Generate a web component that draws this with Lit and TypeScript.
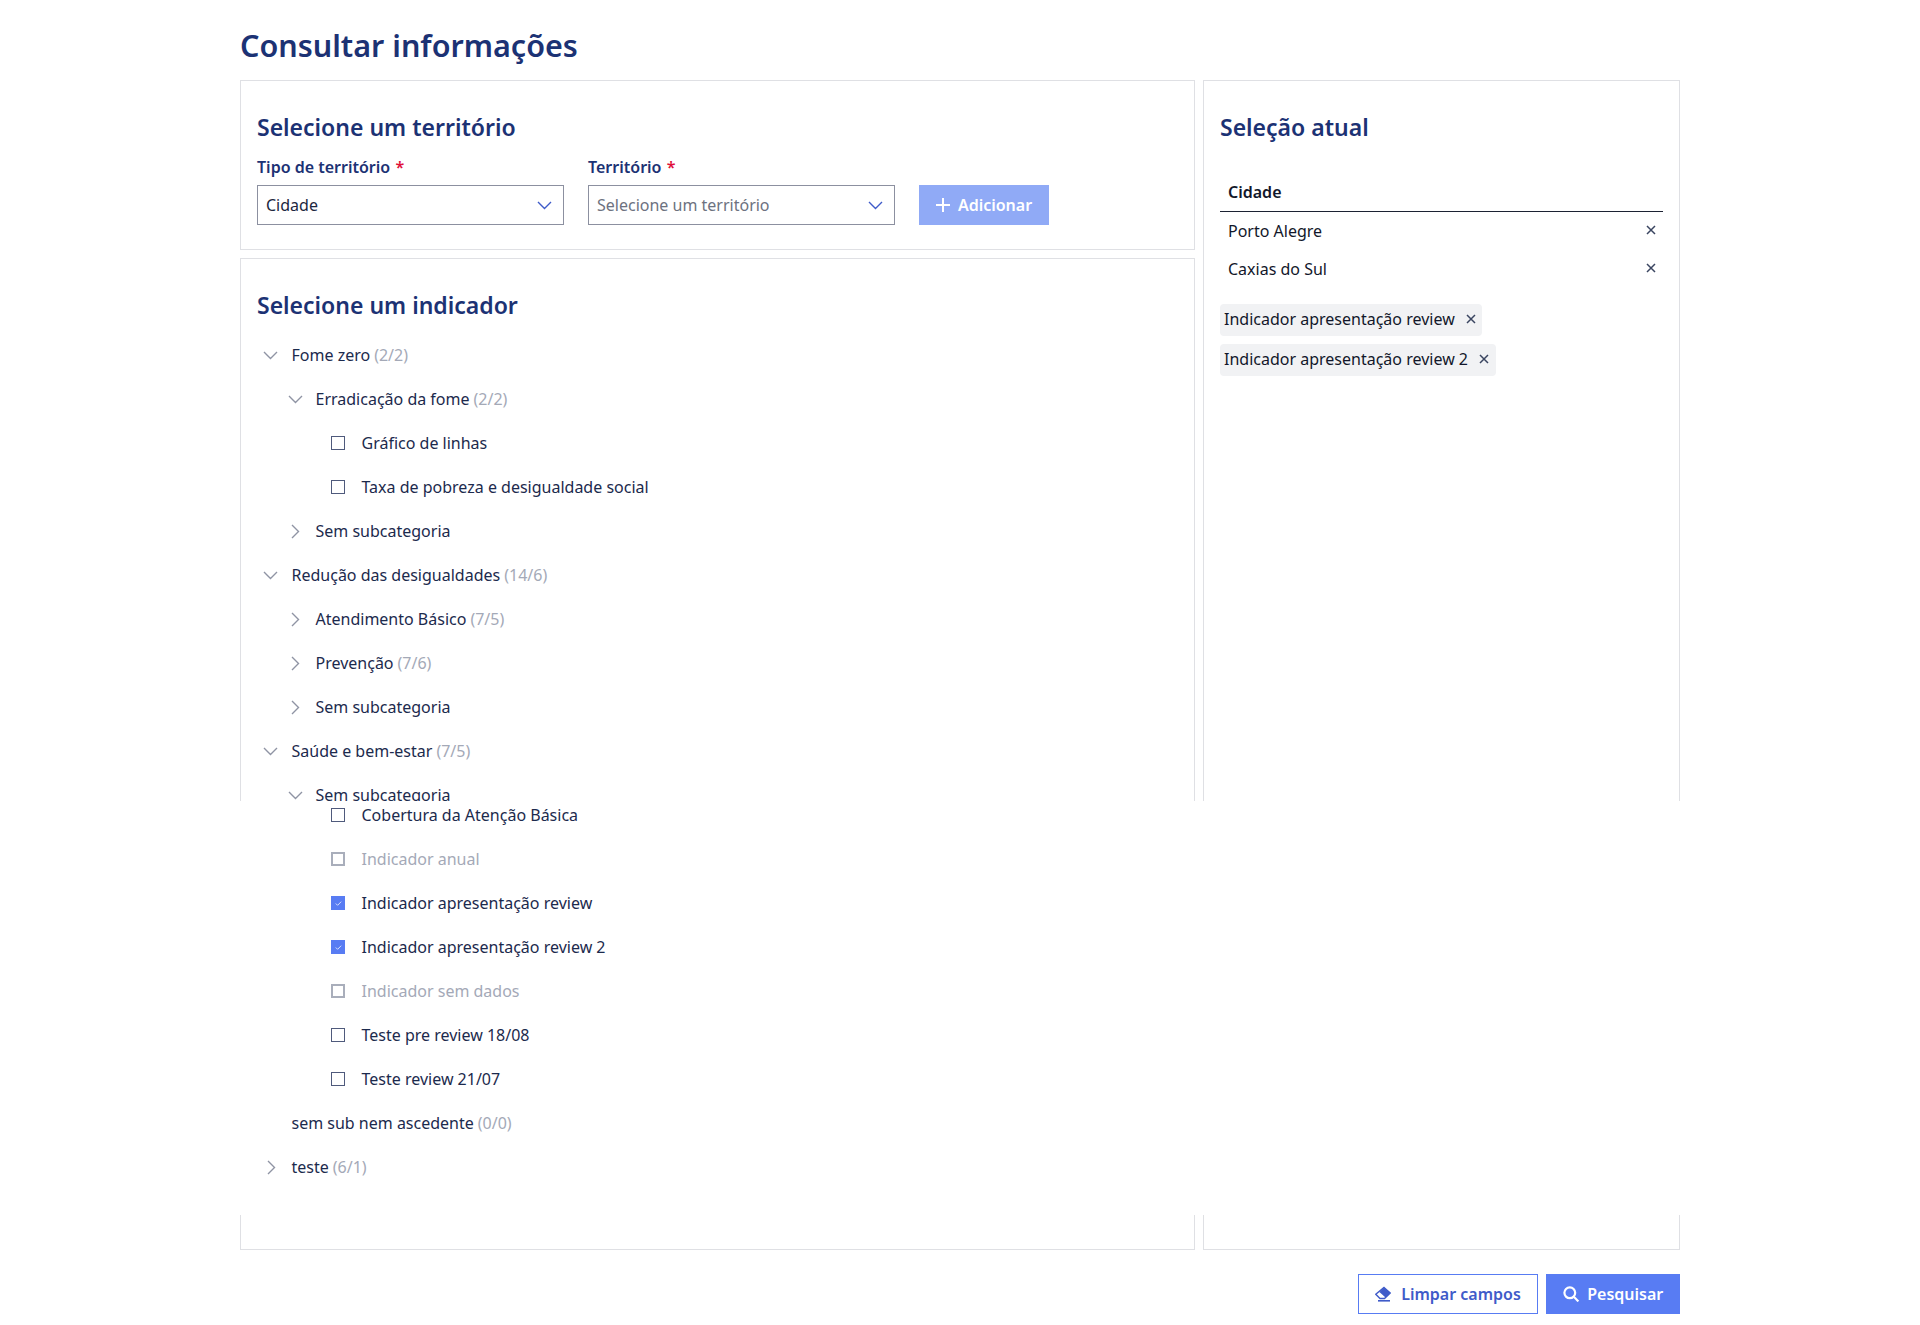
import { LitElement, html, css, svg } from "lit";
import { customElement } from "lit/decorators.js";

type Row = { level: 1 | 2 | 3; text: string; count?: string; kind: "open" | "closed" | "none" | "check" | "checked" | "disabled" };

const topRows: Row[] = [
  { level: 1, text: "Fome zero", count: "(2/2)", kind: "open" },
  { level: 2, text: "Erradicação da fome", count: "(2/2)", kind: "open" },
  { level: 3, text: "Gráfico de linhas", kind: "check" },
  { level: 3, text: "Taxa de pobreza e desigualdade social", kind: "check" },
  { level: 2, text: "Sem subcategoria", kind: "closed" },
  { level: 1, text: "Redução das desigualdades", count: "(14/6)", kind: "open" },
  { level: 2, text: "Atendimento Básico", count: "(7/5)", kind: "closed" },
  { level: 2, text: "Prevenção", count: "(7/6)", kind: "closed" },
  { level: 2, text: "Sem subcategoria", kind: "closed" },
  { level: 1, text: "Saúde e bem-estar", count: "(7/5)", kind: "open" },
  { level: 2, text: "Sem subcategoria", kind: "open" },
];
const lowerRows: Row[] = [
  { level: 3, text: "Cobertura da Atenção Básica", kind: "check" },
  { level: 3, text: "Indicador anual", kind: "disabled" },
  { level: 3, text: "Indicador apresentação review", kind: "checked" },
  { level: 3, text: "Indicador apresentação review 2", kind: "checked" },
  { level: 3, text: "Indicador sem dados", kind: "disabled" },
  { level: 3, text: "Teste pre review 18/08", kind: "check" },
  { level: 3, text: "Teste review 21/07", kind: "check" },
  { level: 1, text: "sem sub nem ascedente", count: "(0/0)", kind: "none" },
  { level: 1, text: "teste", count: "(6/1)", kind: "closed" },
];

const down = svg`<path d="M1 1l6.5 6.5L14 1" fill="none" stroke="currentColor" stroke-width="1.4"/>`;
const right = svg`<path d="M1 1l6.5 6.5L1 14" fill="none" stroke="currentColor" stroke-width="1.4"/>`;
const cross = html`<svg class="x" viewBox="0 0 10 10" width="10" height="10"><path d="M1 1l8 8M9 1l-8 8" fill="none" stroke="currentColor" stroke-width="1.5"/></svg>`;
const chevSelect = html`<svg class="selchev" viewBox="0 0 15 9" width="15" height="9">${down}</svg>`;

@customElement("app-root")
export class AppRoot extends LitElement {
  static styles = css`
    :host { display: block; font-family: "Noto Sans", sans-serif; color: #1c2740; background: #fff; font-size: 16px; }
    .page { position: relative; width: 1440px; margin: 0 auto; padding: 24px 0 11px; }
    h1 { margin: -1px 0 13px; font-size: 30.5px; line-height: 44px; height: 44px; font-weight: 600; color: #1c3274; }
    h2 { margin: 0; font-size: 23px; line-height: 32px; font-weight: 600; color: #1c3274; }
    .columns { display: grid; grid-template-columns: 955px 477px; gap: 8px; height: 1170px; }
    .left { display: flex; flex-direction: column; gap: 8px; min-height: 0; }
    .panel { border: 1px solid #dfe0e4; padding: 30px 16px 24px; box-sizing: border-box; }
    .grow { flex: 1; }
    .fields { display: flex; gap: 24px; margin-top: 12px; align-items: flex-end; }
    .field { width: 307px; }
    label { display: block; font-weight: 600; font-size: 16px; line-height: 24px; margin-bottom: 6px; color: #1c3274; }
    label span { color: #e0103a; margin-left: 1px; }
    .select { height: 40px; box-sizing: border-box; border: 1px solid #8c90a0; display: flex; align-items: center; justify-content: space-between; padding: 0 8px; font-size: 16px; color: #1c2740; }
    .select.ph { color: #6d7280; }
    .selchev { color: #3f5bc9; margin-right: 3px; }
    button { font: inherit; font-weight: 600; font-size: 16px; height: 40px; border: 1px solid #587cf3; background: #587cf3; color: #fff; display: inline-flex; align-items: center; justify-content: center; gap: 7px; padding: 0; box-sizing: border-box; }
    button.add { width: 130px; background: #90aaf6; border-color: #90aaf6; gap: 8px; }
    button.clear { width: 180px; background: #fff; color: #3f5bc9; gap: 10px; }
    button.search { width: 134px; gap: 8.5px; }
    .tree { margin-top: 12px; }
    .row { height: 44px; display: flex; align-items: center; line-height: 24px; color: #1c2a4d; }
    .l1 { padding-left: 0; }
    .l2 { padding-left: 24px; }
    .l3 { padding-left: 74px; }
    .ico { width: 34.5px; display: flex; justify-content: flex-start; padding-left: 6px; box-sizing: border-box; color: #8f94a4; flex: none; }
    .l2 .ico { padding-left: 7px; }
    .closed .ico, .l2.closed .ico { padding-left: 10px; }
    .box { width: 14px; height: 14px; box-sizing: border-box; border: 1px solid #4f5a7c; margin-right: 16.5px; flex: none; display: flex; align-items: center; justify-content: center; }
    .disabled .box { border: 2px solid #a9aebb; }
    .disabled { color: #a4a9b7; }
    .checked .box { background: #587cf3; border-color: #587cf3; }
    .count { color: #a4a9b7; margin-left: 4px; }
    .overlay { position: absolute; left: 0; right: 0; top: 801px; height: 414px; background: #fff; padding: 0 17px; box-sizing: border-box; }
    .overlay .list { margin-top: -8px; }
    .table { margin-top: 33px; }
    .th { font-weight: 600; color: #12172a; padding: 0 8px; line-height: 32px; height: 36px; border-bottom: 1px solid #1c2233; box-sizing: border-box; font-size: 16px; }
    .tr { height: 38px; display: flex; justify-content: space-between; align-items: center; padding: 0 8px; color: #12172a; }
    .tr .x { color: #3a4560; margin-top: -2px; margin-right: -1px; }
    .tags { display: flex; flex-direction: column; align-items: flex-start; gap: 8px; margin-top: 16px; }
    .tag { height: 32px; background: #f1f2f4; border-radius: 4px; display: inline-flex; align-items: center; padding: 0 6.5px 2px 4px; box-sizing: border-box; gap: 11px; color: #12172a; }
    .tag .x { color: #3a4560; }
    .actions { display: flex; justify-content: flex-end; gap: 8px; margin-top: 24px; }
  `;

  private row(r: Row) {
    return html`<div class="row l${r.level} ${r.kind}">
      ${r.kind === "open" ? html`<span class="ico"><svg viewBox="0 0 15 9" width="15" height="9">${down}</svg></span>` : ""}
      ${r.kind === "closed" ? html`<span class="ico"><svg viewBox="0 0 9 15" width="9" height="15">${right}</svg></span>` : ""}
      ${r.kind === "none" ? html`<span class="ico"></span>` : ""}
      ${r.kind === "check" || r.kind === "disabled" || r.kind === "checked"
        ? html`<span class="box">${r.kind === "checked"
            ? html`<svg viewBox="0 0 10 10" width="9" height="9"><path d="M2 5l2 2 4-4" fill="none" stroke="#e4eafd" stroke-width="1"/></svg>`
            : ""}</span>`
        : ""}
      <span>${r.text}</span>${r.count ? html`<span class="count">${r.count}</span>` : ""}
    </div>`;
  }

  render() {
    return html`<div class="page">
      <h1>Consultar informações</h1>
      <div class="columns">
        <div class="left">
          <section class="panel">
            <h2>Selecione um território</h2>
            <div class="fields">
              <div class="field"><label>Tipo de território <span>*</span></label><div class="select"><span>Cidade</span>${chevSelect}</div></div>
              <div class="field"><label>Território <span>*</span></label><div class="select ph"><span>Selecione um território</span>${chevSelect}</div></div>
              <button class="add"><svg viewBox="0 0 14 14" width="14" height="14"><path d="M7 0v14M0 7h14" stroke="#fff" stroke-width="2"/></svg>Adicionar</button>
            </div>
          </section>
          <section class="panel grow">
            <h2>Selecione um indicador</h2>
            <div class="tree">${topRows.map((r) => this.row(r))}</div>
          </section>
        </div>
        <section class="panel">
          <h2>Seleção atual</h2>
          <div class="table">
            <div class="th">Cidade</div>
            <div class="tr"><span>Porto Alegre</span>${cross}</div>
            <div class="tr"><span>Caxias do Sul</span>${cross}</div>
          </div>
          <div class="tags">
            <span class="tag">Indicador apresentação review ${cross}</span>
            <span class="tag">Indicador apresentação review 2 ${cross}</span>
          </div>
        </section>
      </div>
      <div class="actions">
        <button class="clear"><svg viewBox="0 0 16 16" width="16" height="16"><path d="M9 1.5L15.2 7 9.5 12.5H5L.8 8.3z" fill="none" stroke="currentColor" stroke-width="1.4"/><path d="M9 1.5L15.2 7 10.5 11.6 4.4 5.9z" fill="currentColor"/><path d="M3 14.8h12" stroke="currentColor" stroke-width="1.6"/></svg>Limpar campos</button>
        <button class="search"><svg viewBox="0 0 16 16" width="16" height="16"><circle cx="6.8" cy="6.8" r="5.4" fill="none" stroke="#fff" stroke-width="2.2"/><path d="M10.8 10.8L15.4 15.4" stroke="#fff" stroke-width="2.2"/></svg>Pesquisar</button>
      </div>
      <div class="overlay"><div class="list">${lowerRows.map((r) => this.row(r))}</div></div>
    </div>`;
  }
}
